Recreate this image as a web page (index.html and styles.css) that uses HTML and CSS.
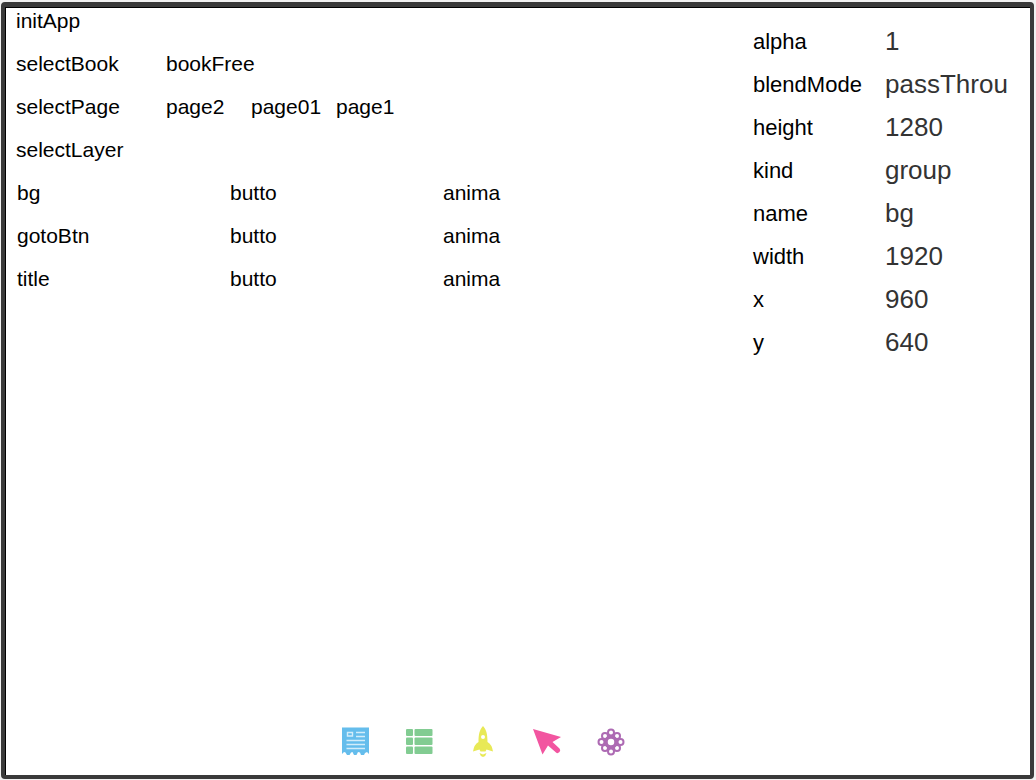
FILE: index.html
```html
<!DOCTYPE html>
<html lang="en">
<head>
<meta charset="utf-8">
<meta name="viewport" content="width=device-width, initial-scale=1">
<title>Book editor</title>
<link rel="stylesheet" href="styles.css">
</head>
<body>
<div class="app">
  <div class="workspace">
    <main class="commands">
      <div class="row"><button type="button">initApp</button></div>
      <div class="row"><button type="button">selectBook</button><button type="button">bookFree</button></div>
      <div class="row"><button type="button">selectPage</button><button type="button">page2</button><button type="button">page01</button><button type="button">page1</button></div>
      <div class="row"><button type="button">selectLayer</button></div>
      <div class="layers">
        <button type="button">bg</button><button type="button">butto</button><button type="button">anima</button>
        <button type="button">gotoBtn</button><button type="button">butto</button><button type="button">anima</button>
        <button type="button">title</button><button type="button">butto</button><button type="button">anima</button>
      </div>
    </main>
    <form class="properties">
      <label for="alpha">alpha</label><input id="alpha" type="text" value="1">
      <label for="blend">blendMode</label><input id="blend" type="text" value="passThrou">
      <label for="height">height</label><input id="height" type="text" value="1280">
      <label for="kind">kind</label><input id="kind" type="text" value="group">
      <label for="name">name</label><input id="name" type="text" value="bg">
      <label for="width">width</label><input id="width" type="text" value="1920">
      <label for="x">x</label><input id="x" type="text" value="960">
      <label for="y">y</label><input id="y" type="text" value="640">
    </form>
  </div>
  <nav class="toolbar" aria-label="Tools">
    <button type="button" aria-label="Page">
      <svg viewBox="0 0 32 32"><path fill="#65bdec" d="M3 2.500H30V29L28 27L26 28L25 30H22L21 27.500L19 27L17.500 30H15L13.500 27L12 27.500L10.500 30H8L6.500 27.500L5 27L3 29Z"/><path fill="none" stroke="#d3edfa" stroke-width="1.400" d="M8.500 7.500h5v3.500h-5zM17 7.500h9M17 11.500h9M7.500 15.500h18.500M7.500 19.500h18.500M7.500 23.500h18.500"/></svg>
    </button>
    <button type="button" aria-label="Layers">
      <svg viewBox="0 0 32 32"><g fill="#82cc92"><rect x="3" y="4" width="7" height="7" rx="1"/><rect x="11.500" y="4" width="18" height="7" rx="1"/><rect x="3" y="12.500" width="7" height="7.500" rx="1"/><rect x="11.500" y="12.500" width="18" height="7.500" rx="1"/><rect x="3" y="21.500" width="7" height="7.500" rx="1"/><rect x="11.500" y="21.500" width="18" height="7.500" rx="1"/></g></svg>
    </button>
    <button type="button" aria-label="Launch">
      <svg viewBox="0 0 32 32"><path fill="#e8e956" fill-rule="evenodd" d="M16 1C19.500 5 20.500 9 20.500 17Q25 19.500 26 26.500L19.500 24.500L18.500 26.500H13.500L12.500 24.500L6 26.500Q7 19.500 11.500 17C11.500 9 12.500 5 16 1ZM16 10a2 2 0 1 0 0 4a2 2 0 0 0 0-4Z"/><path fill="#e8e956" d="M12.500 28L16 29.500L19.500 28Q19 31 16 32Q13 31 12.500 28Z"/></svg>
    </button>
    <button type="button" aria-label="Select">
      <svg viewBox="0 0 32 32"><path fill="#f255a0" d="M2 4L30 12L21.500 17L28.500 23.500Q30 25 28.500 27Q26.500 29 25 27.500L17 20.500L11.500 29.500Z"/></svg>
    </button>
    <button type="button" aria-label="Effects">
      <svg viewBox="0 0 32 32"><g fill="none" stroke="#ad6ab3" stroke-width="2"><circle cx="16" cy="7.500" r="3"/><circle cx="22" cy="11" r="3"/><circle cx="25.500" cy="17" r="3"/><circle cx="22" cy="23" r="3"/><circle cx="16" cy="26.500" r="3"/><circle cx="10" cy="23" r="3"/><circle cx="6.500" cy="17" r="3"/><circle cx="10" cy="11" r="3"/><circle cx="16" cy="17" r="5" stroke-width="3.500"/></g></svg>
    </button>
  </nav>
</div>
</body>
</html>
```
FILE: styles.css
```css
* { box-sizing: border-box; }

body {
  margin: 0;
  padding: 2px 2px 1px 1px;
  background: #f1f1f1;
  color: #000;
  font-family: "Liberation Sans", Arial, sans-serif;
  font-size: 21px;
}

.app {
  display: flex;
  flex-direction: column;
  min-height: calc(100vh - 3px);
  padding-bottom: 18px;
  border: 4px solid #3a3a3a;
  border-top-width: 5px;
  border-radius: 4px;
  background: #fff;
  box-shadow: inset 1px 1px #000;
}

.workspace {
  display: flex;
  flex: 1;
  justify-content: space-between;
}

.commands { padding-left: 11px; }

button, input {
  margin: 0;
  padding: 0;
  border: 0;
  background: none;
  color: inherit;
  font: inherit;
}

button { text-align: left; cursor: pointer; }

.row { display: flex; height: 43px; }
.row button { width: 85px; height: 28px; }
.row button:first-child { width: 150px; }

.layers {
  display: grid;
  grid-template-columns: repeat(3, 213px);
  grid-auto-rows: 43px;
  padding-left: 1px;
}

.layers button { height: 28px; }

.properties {
  display: grid;
  grid-template-columns: 132px 124px;
  grid-auto-rows: 43px;
  align-content: start;
  align-items: center;
  padding: 13px 21px 0 0;
}

.properties label { font-size: 22px; }

.properties input {
  width: 100%;
  color: #333;
  font-size: 26px;
}

.toolbar {
  display: flex;
  justify-content: center;
  gap: 32px;
  padding-right: 70px;
}

.toolbar button { width: 32px; height: 32px; }
.toolbar svg { display: block; width: 32px; height: 32px; }
```
